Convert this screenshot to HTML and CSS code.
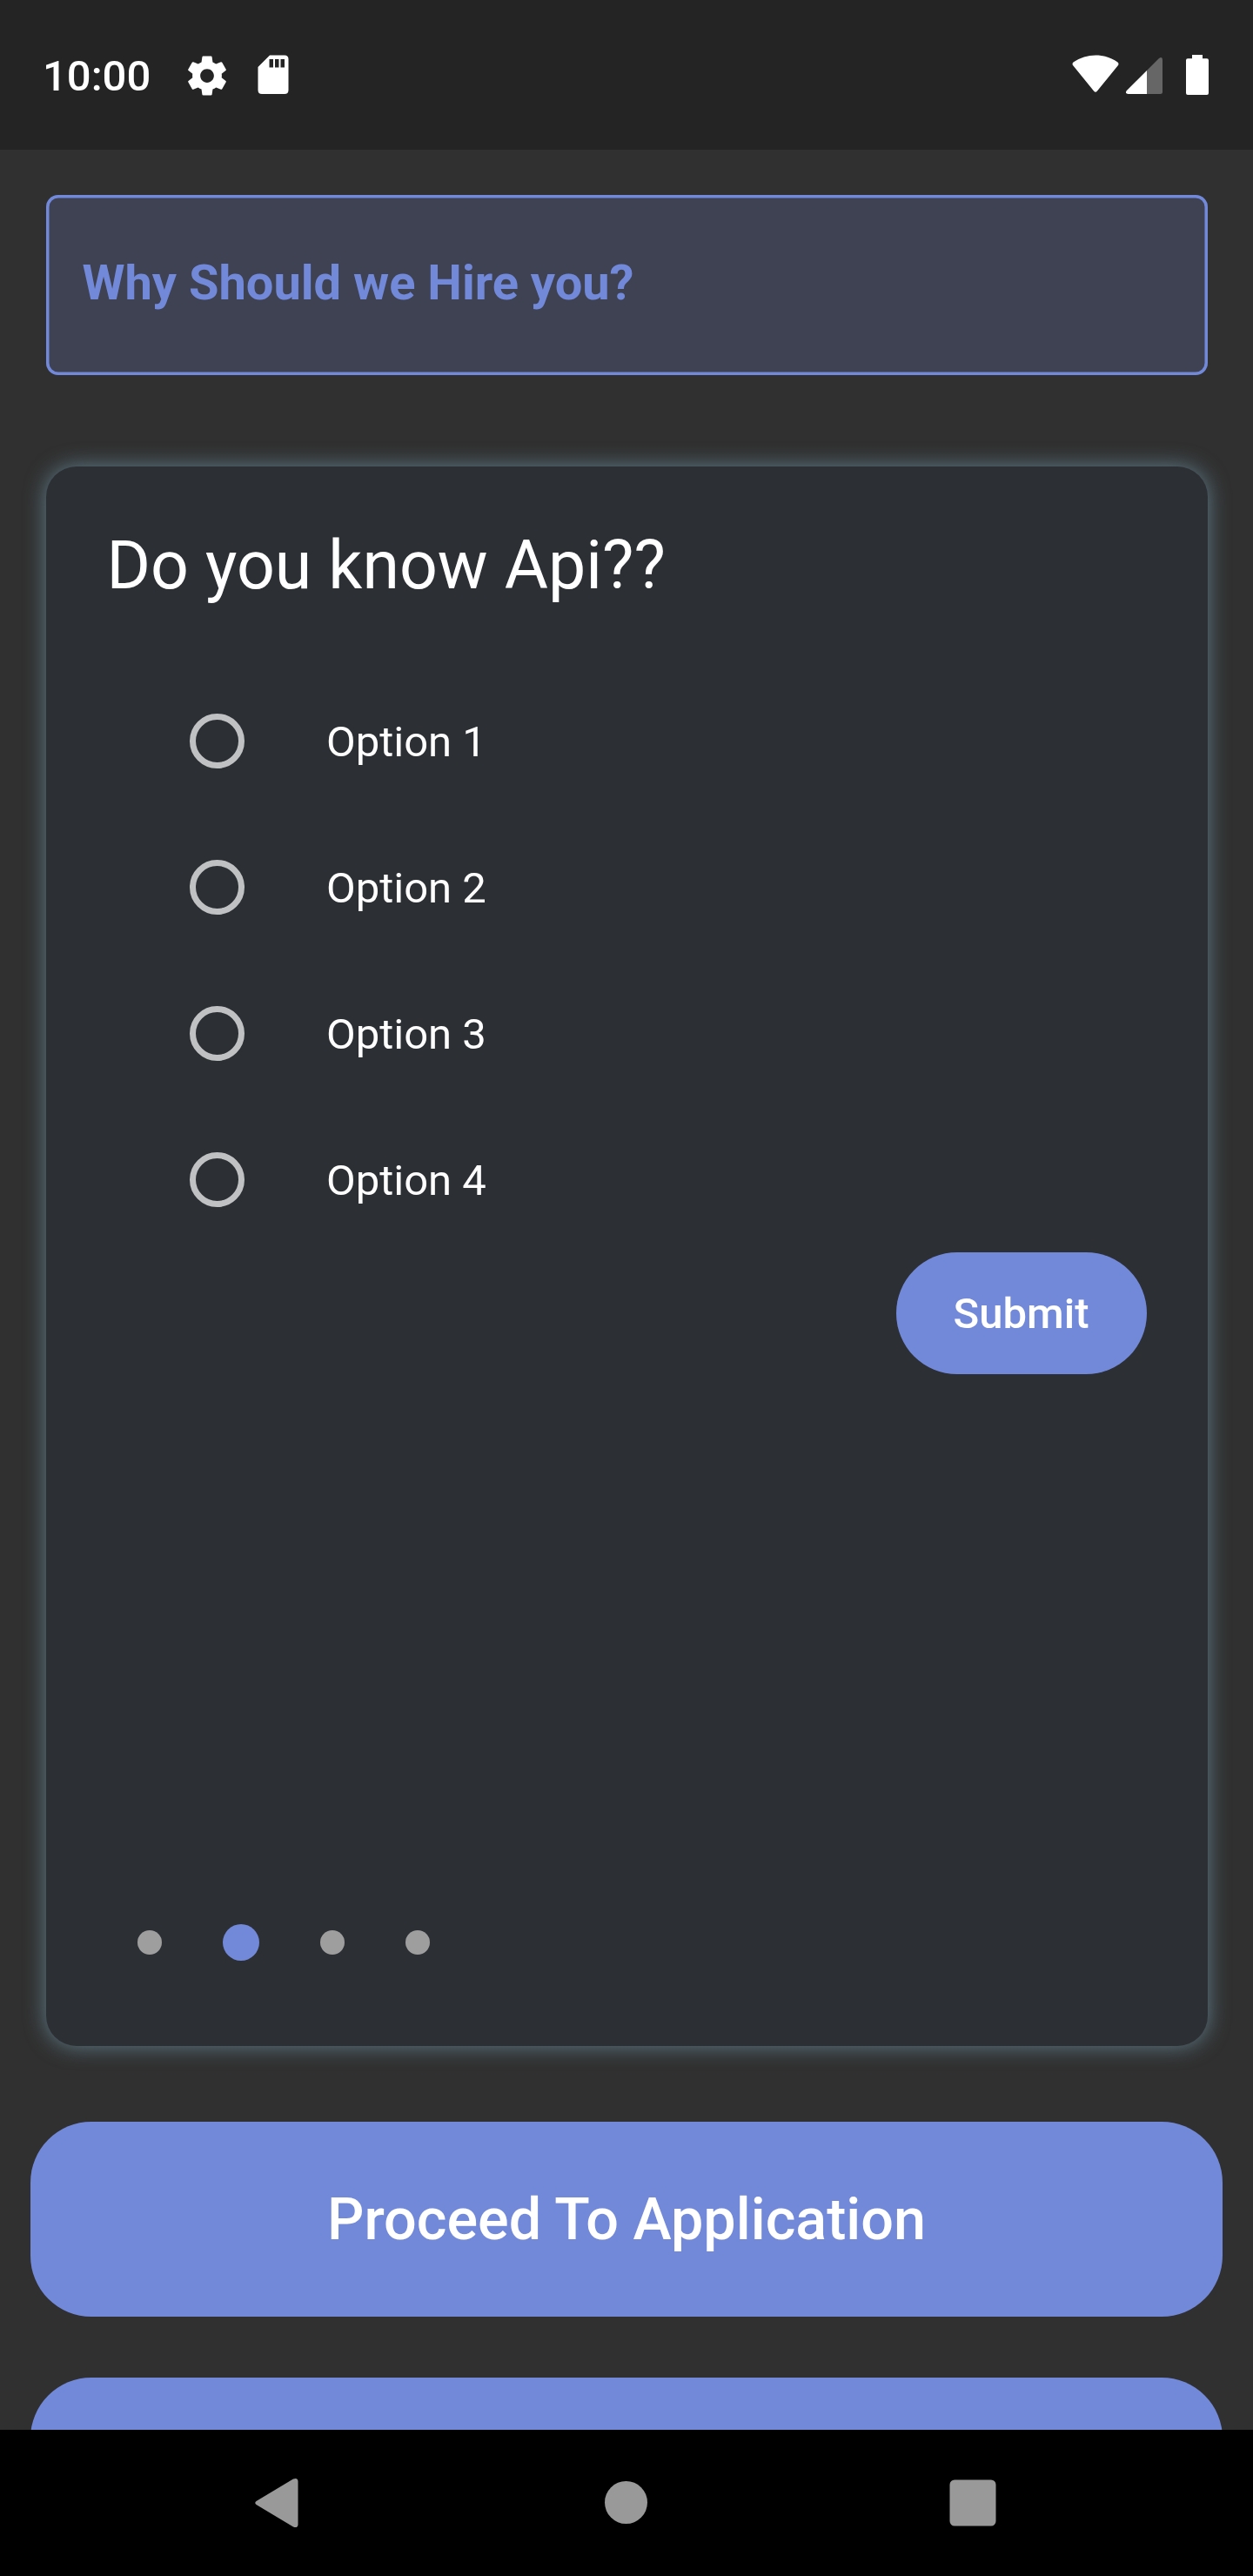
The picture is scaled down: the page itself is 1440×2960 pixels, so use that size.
FILE: index.html
```html
<!DOCTYPE html>
<html lang="en">
<head>
<meta charset="utf-8">
<title>Application</title>
<link rel="stylesheet" href="styles.css">
</head>
<body>
<div class="screen">
  <header class="status-bar">
    <span class="clock">10:00</span>
    <svg class="icon-gear" width="54" height="54" viewBox="0 0 24 24"><path fill="#fff" d="M19.43 12.98c.04-.32.07-.64.07-.98s-.03-.66-.07-.98l2.11-1.65c.19-.15.24-.42.12-.64l-2-3.46c-.12-.22-.39-.3-.61-.22l-2.49 1c-.52-.4-1.08-.73-1.69-.98l-.38-2.65C14.46 2.18 14.25 2 14 2h-4c-.25 0-.46.18-.49.42l-.38 2.65c-.61.25-1.17.59-1.69.98l-2.49-1c-.23-.09-.49 0-.61.22l-2 3.46c-.13.22-.07.49.12.64l2.11 1.65c-.04.32-.07.65-.07.98s.03.66.07.98l-2.11 1.65c-.19.15-.24.42-.12.64l2 3.46c.12.22.39.3.61.22l2.49-1c.52.4 1.08.73 1.69.98l.38 2.65c.03.24.24.42.49.42h4c.25 0 .46-.18.49-.42l.38-2.65c.61-.25 1.17-.59 1.69-.98l2.49 1c.23.09.49 0 .61-.22l2-3.46c.12-.22.07-.49-.12-.64l-2.11-1.65zM12 15.5c-1.93 0-3.5-1.57-3.5-3.5s1.57-3.5 3.5-3.5 3.5 1.57 3.5 3.5-1.57 3.5-3.5 3.5z"/></svg>
    <svg class="icon-card" width="36" height="46" viewBox="0 0 36 46"><path fill="#fff" fill-rule="evenodd" d="M14 .5H31Q35.500 .5 35.500 5V40.500Q35.500 45 31 45H5Q.5 45 .5 40.500V14ZM13.500 5V14.500H18V5ZM20 5V14.500H24.500V5ZM26.500 5V14.500H31V5Z"/></svg>
    <svg class="icon-wifi" width="54" height="44" viewBox="0 0 54 44"><path fill="#fff" d="M1.500 8.500C17 -2.200 37.500 -2.200 52.500 8.500Q54.200 10 53 12L29 41.500Q27 44 25 41.500L1 12Q-.2 10 1.500 8.500Z"/></svg>
    <svg class="icon-signal" width="42" height="42" viewBox="0 0 42 42"><path fill="#666" d="M24 15 38 1Q42 -1.500 42 3V39.500Q42 42 39.500 42H24Z"/><path fill="#fff" d="M24 15V42H2.500Q-1.500 41.500 .7 38.200Z"/></svg>
    <svg class="icon-battery" width="26" height="46" viewBox="0 0 26 46"><path fill="#fff" d="M7 0H19V4.300H24Q26 4.300 26 6.300V44Q26 46 24 46H2Q0 46 0 44V6.300Q0 4.300 2 4.300H7Z"/></svg>
  </header>

  <main class="content">
    <div class="hire-box">Why Should we Hire you?</div>

    <section class="card">
      <h1 class="question">Do you know Api??</h1>
      <div class="options">
        <label class="option"><span class="radio"></span><span class="option-text">Option 1</span></label>
        <label class="option"><span class="radio"></span><span class="option-text">Option 2</span></label>
        <label class="option"><span class="radio"></span><span class="option-text">Option 3</span></label>
        <label class="option"><span class="radio"></span><span class="option-text">Option 4</span></label>
      </div>
      <button class="submit">Submit</button>
      <div class="dots">
        <span class="dot"></span>
        <span class="dot dot-active"></span>
        <span class="dot"></span>
        <span class="dot"></span>
      </div>
    </section>

    <button class="action">Proceed To Application</button>
    <button class="action"></button>
  </main>

  <nav class="nav-bar">
    <svg width="56" height="60" viewBox="0 0 56 60"><path fill="#999" d="M4.500 28 47 2.500Q52 .5 52.500 5V55Q52 59.500 47 57.500L4.500 32Q2 30 4.500 28Z"/></svg>
    <svg width="56" height="60" viewBox="0 0 56 60"><circle cx="29.500" cy="29.500" r="24.500" fill="#999"/></svg>
    <svg width="56" height="60" viewBox="0 0 56 60"><rect x="1.500" y="3.500" width="53" height="53" rx="5.500" fill="#999"/></svg>
  </nav>
</div>
</body>
</html>
```
FILE: styles.css
```css
* {
  box-sizing: border-box;
}

body {
  margin: 0;
  background: #303030;
  font-family: Roboto, "Liberation Sans", sans-serif;
}

.screen {
  display: flex;
  flex-direction: column;
  width: 1440px;
  height: 2960px;
  overflow: hidden;
  background: #303030;
}

svg {
  display: block;
  flex: none;
}

button {
  border: 0;
  font-family: inherit;
  color: #fff;
  background: #7289da;
}

.status-bar {
  display: flex;
  align-items: flex-start;
  flex: none;
  height: 172px;
  padding: 59px 51px 0 49px;
  background: #242424;
}

.clock {
  width: 161.5px;
  line-height: 58px;
  font-size: 49px;
  font-weight: 500;
  color: #fff;
}

.icon-gear {
  margin-top: 1px;
}

.icon-card {
  margin: 4px 0 0 31.5px;
}

.icon-wifi {
  margin: 4px 0 0 auto;
}

.icon-signal {
  margin: 7px 0 0 8px;
}

.icon-battery {
  margin: 4px 0 0 27px;
}

.content {
  display: flex;
  flex-direction: column;
  flex: none;
  height: 2620px;
  padding: 52px 35px 0;
  overflow: hidden;
}

.hire-box {
  flex: none;
  height: 207px;
  margin: 0 17.5px 105px;
  padding: 68px 42px 0;
  border-radius: 14px;
  background: #3f4252;
  box-shadow: inset 0 0 0 3.5px #7289da;
  line-height: 66px;
  font-size: 56px;
  font-weight: 700;
  color: #7289da;
}

.card {
  display: flex;
  flex-direction: column;
  flex: none;
  height: 1815px;
  margin: 0 17.5px 87px;
  padding: 69px 70px 98px;
  border-radius: 35px;
  background: #2c2f33;
  box-shadow: 0 0 24px #607d8b;
}

.question {
  margin: 0 0 72px;
  line-height: 90px;
  font-size: 77px;
  font-weight: 400;
  color: #fff;
}

.option {
  display: flex;
  align-items: center;
  height: 168px;
  padding-left: 95px;
}

.radio {
  width: 63px;
  height: 63px;
  border: 7px solid #c0c1c2;
  border-radius: 50%;
}

.option-text {
  margin-left: 94.5px;
  padding-top: 4px;
  line-height: 58px;
  font-size: 49px;
  color: #fff;
}

.submit {
  align-self: flex-end;
  width: 288px;
  height: 140px;
  border-radius: 70px;
  font-size: 49px;
  font-weight: 500;
}

.dots {
  display: flex;
  align-items: center;
  gap: 70px;
  height: 42px;
  margin-top: auto;
  padding-left: 35px;
}

.dot {
  width: 28px;
  height: 28px;
  border-radius: 50%;
  background: #9e9e9e;
}

.dot-active {
  width: 42px;
  height: 42px;
  background: #7289da;
}

.action {
  flex: none;
  height: 224px;
  margin-bottom: 69.5px;
  border-radius: 70px;
  font-size: 66.5px;
  font-weight: 500;
}

.nav-bar {
  display: flex;
  align-items: center;
  justify-content: space-between;
  flex: none;
  height: 168px;
  padding: 0 294px 0 290px;
  background: #000;
}
```
